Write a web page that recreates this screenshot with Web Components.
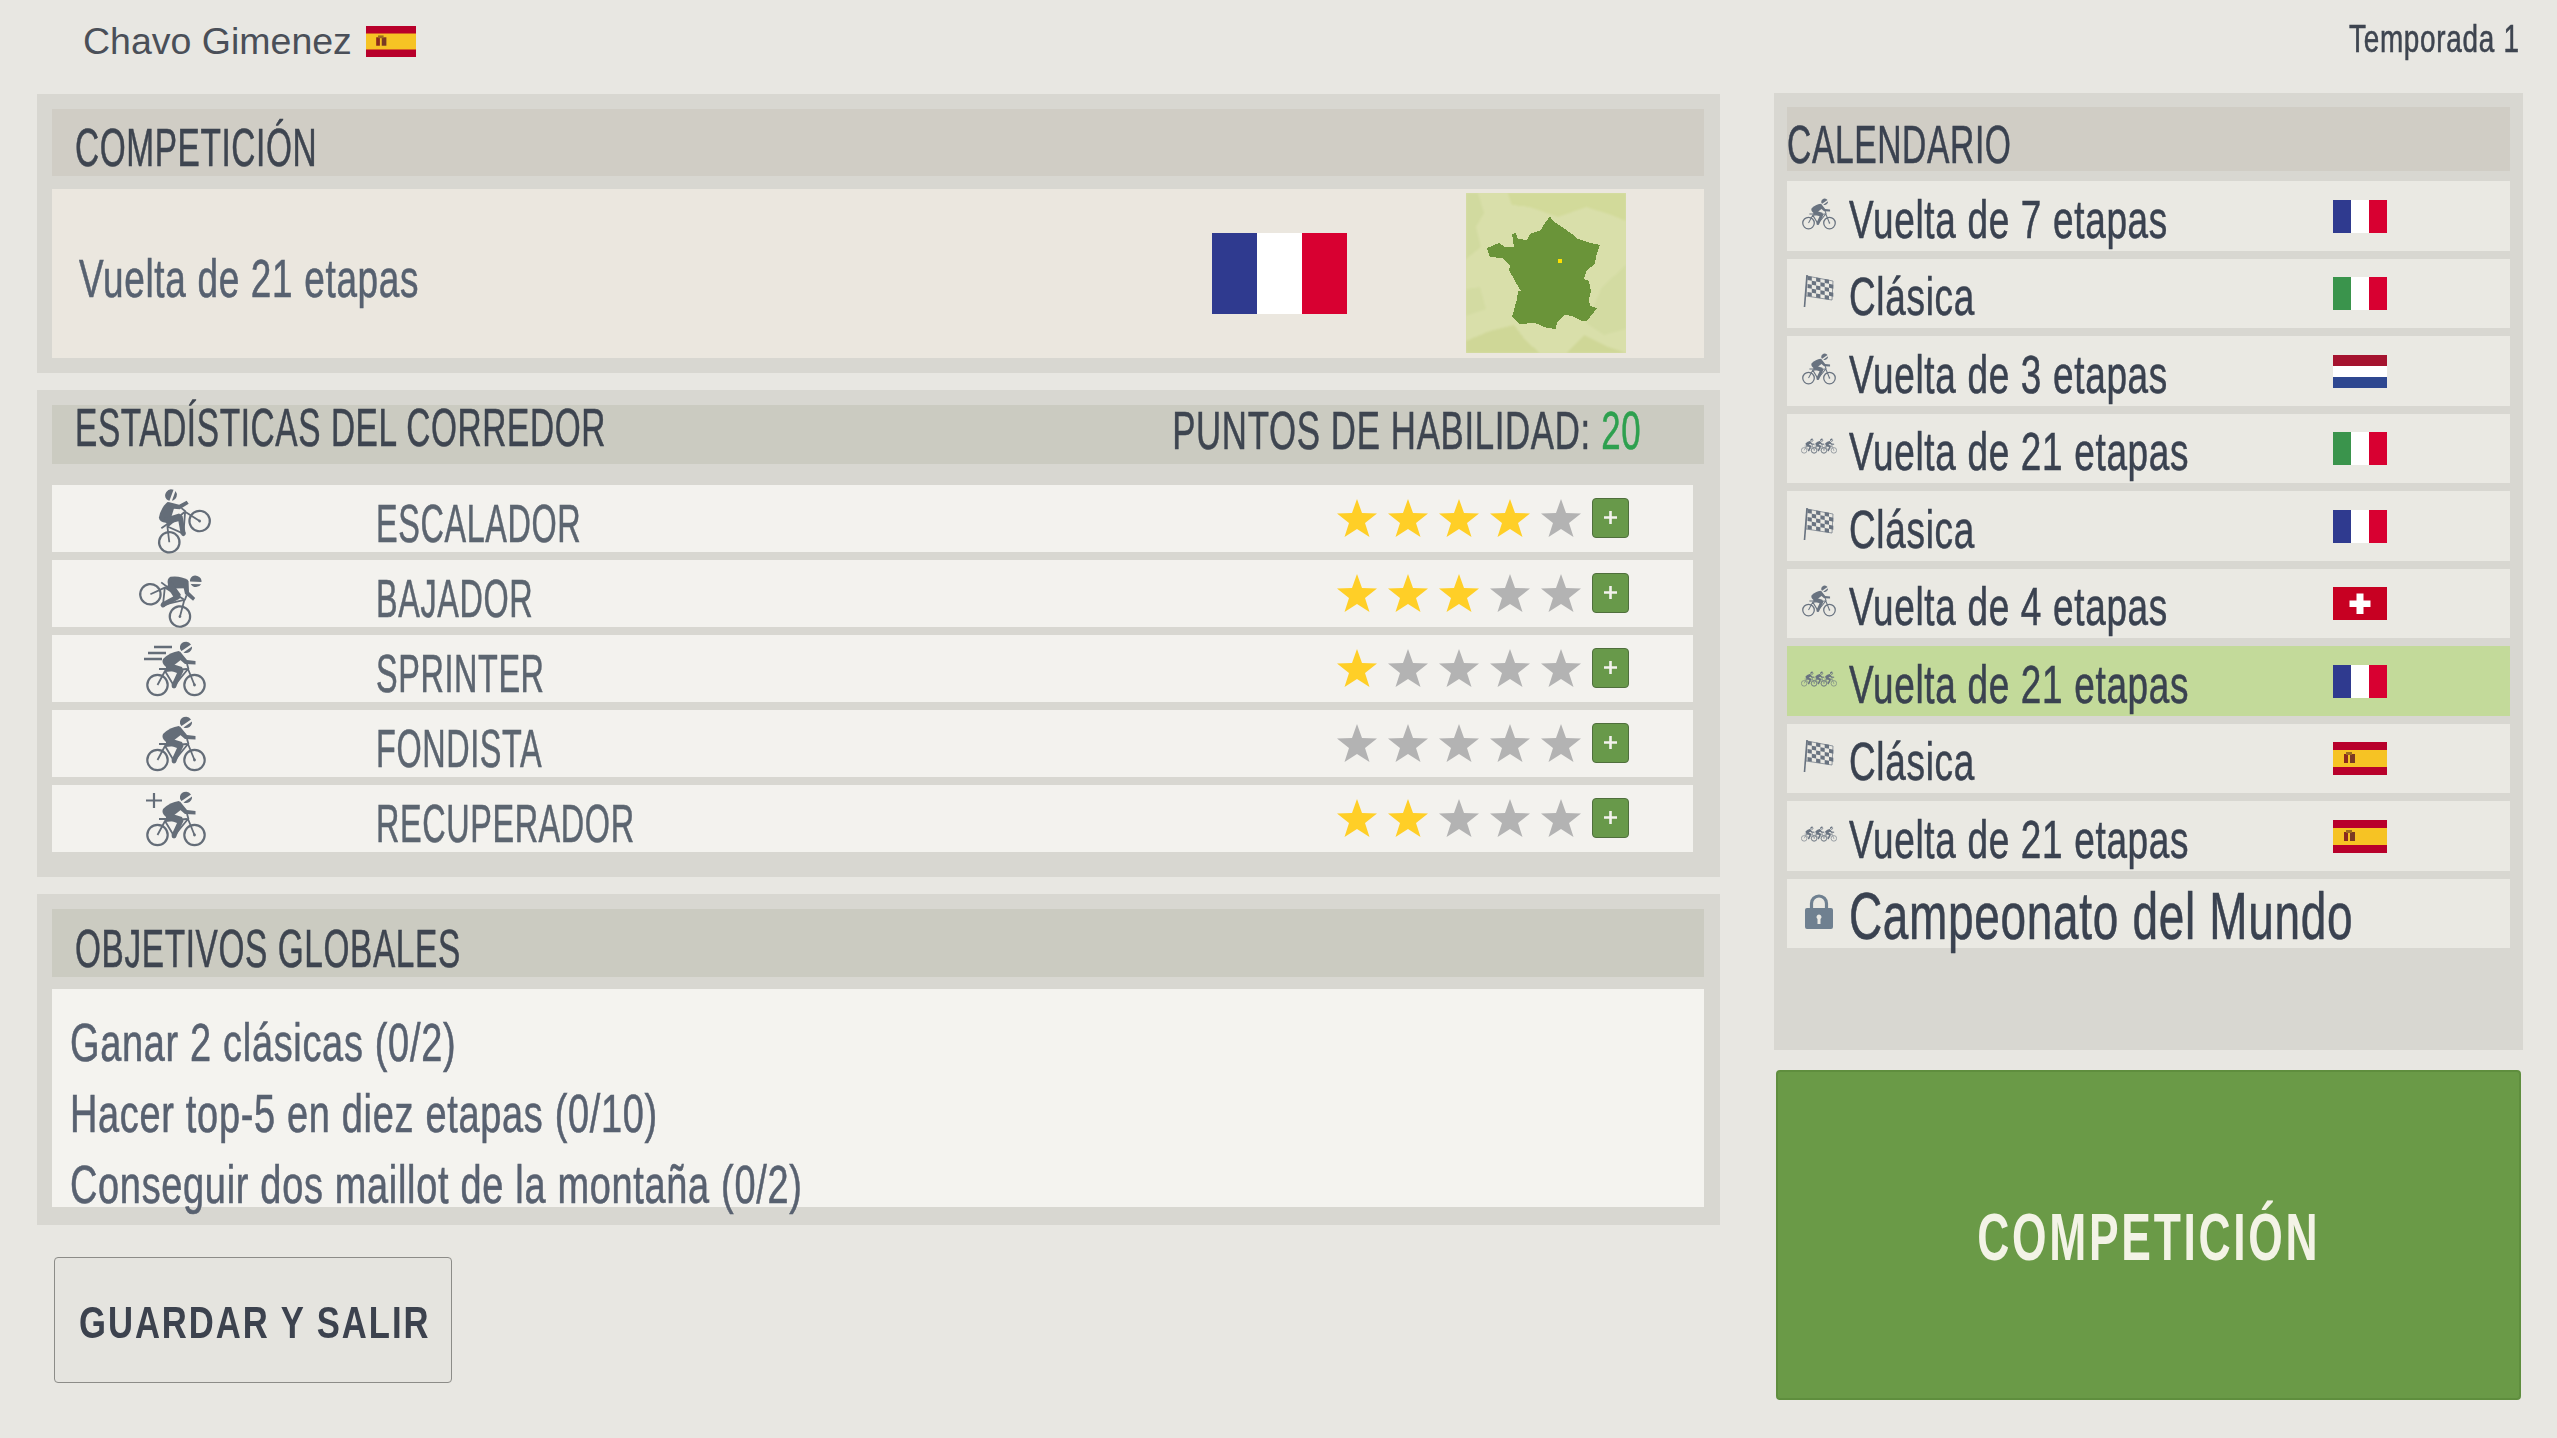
<!DOCTYPE html>
<html lang="es">
<head>
<meta charset="utf-8">
<title>Calendario</title>
<style>
  html, body { margin: 0; height: 100%; }
  body {
    width: 2557px;
    height: 1438px;
    overflow: hidden;
    background: #e8e7e2;
    color: #3e4550;
    font-family: "Liberation Sans", sans-serif;
  }
  .stack { display: flex; flex-direction: column; }
  .columns {
    display: grid;
    grid-template-columns: 1683px 749px;
    column-gap: 54px;
    padding-left: 37px;
    align-items: start;
  }
  .left { gap: 17px; }
  .right { gap: 20px; margin-top: -1px; }
</style>
</head>
<body>
  <top-bar player="Chavo Gimenez" season="Temporada 1"></top-bar>
  <div class="columns">
    <div class="stack left">
      <race-panel heading="COMPETICIÓN" height="279" tone="#d0cdc5" drop="8">
        <race-summary>Vuelta de 21 etapas</race-summary>
      </race-panel>
      <race-panel heading="ESTADÍSTICAS DEL CORREDOR" height="487" head="59" points="20" gap="21" drop="-15" tone="#cbcbc1">
        <stat-row kind="climber" stars="4">ESCALADOR</stat-row>
        <stat-row kind="descent" stars="3">BAJADOR</stat-row>
        <stat-row kind="sprint" stars="1">SPRINTER</stat-row>
        <stat-row kind="plain" stars="0">FONDISTA</stat-row>
        <stat-row kind="plus" stars="2">RECUPERADOR</stat-row>
      </race-panel>
      <race-panel heading="OBJETIVOS GLOBALES" height="331" head="68" gap="12" drop="9" tone="#cbcbc1">
        <goal-list>
          <li>Ganar 2 clásicas (0/2)</li>
          <li>Hacer top-5 en diez etapas (0/10)</li>
          <li>Conseguir dos maillot de la montaña (0/2)</li>
        </goal-list>
      </race-panel>
      <save-button>GUARDAR Y SALIR</save-button>
    </div>
    <div class="stack right">
      <calendar-panel>
        <cal-row kind="solo" code="fr">Vuelta de 7 etapas</cal-row>
        <cal-row kind="flag" code="it">Clásica</cal-row>
        <cal-row kind="solo" code="nl">Vuelta de 3 etapas</cal-row>
        <cal-row kind="group" code="it">Vuelta de 21 etapas</cal-row>
        <cal-row kind="flag" code="fr">Clásica</cal-row>
        <cal-row kind="solo" code="ch">Vuelta de 4 etapas</cal-row>
        <cal-row kind="group" code="fr" current>Vuelta de 21 etapas</cal-row>
        <cal-row kind="flag" code="es">Clásica</cal-row>
        <cal-row kind="group" code="es">Vuelta de 21 etapas</cal-row>
        <cal-row kind="lock" big>Campeonato del Mundo</cal-row>
      </calendar-panel>
      <go-button>COMPETICIÓN</go-button>
    </div>
  </div>

<script>
// the rider drawn on a 60x54 box, used by the stat rows and the calendar
function riderMarkup() {
  return `
    <g fill="none" stroke="currentColor" stroke-width="2.200">
      <circle cx="11.500" cy="43" r="10.200"/>
      <circle cx="48.500" cy="43" r="10.200"/>
    </g>
    <g fill="none" stroke="currentColor" stroke-width="1.800" stroke-linejoin="round">
      <path d="M11.500 43 19 29 28 44 42 27 48.500 43"/>
      <path d="M19 29 41 27M13 27h11M41 22l1.500 5"/>
    </g>
    <g fill="currentColor">
      <path d="M33 9Q24 10 17 17 15 21 20 25L27 24 36 17Z"/>
      <path d="M20 20 36 25 37.500 29 30 45 25.500 43 31 31 20 27Z"/>
      <path d="M31 10 34 9.500 41 18 49.500 19 49.500 22.500 39 22 32 16Z"/>
      <path d="M34 6.500a6 6 0 0 1 11-4l-9.500 6.500a6 6 0 0 1-1.500-2.500Z"/>
      <path d="M37.500 10.500 46 4.500a6 6 0 0 1-8.500 6Z"/>
      <circle cx="48.500" cy="43" r="1.400"/>
      <circle cx="28" cy="44" r="2.400"/>
    </g>`;
}

function flagMarkup(code) {
  const bars = (a, b, c) => `<rect width="54" height="33" fill="${b}"/><rect width="18" height="33" fill="${a}"/><rect x="36" width="18" height="33" fill="${c}"/>`;
  switch (code) {
    case "fr": return bars("#2f3a8f", "#ffffff", "#d80031");
    case "it": return bars("#3a944c", "#ffffff", "#d80031");
    case "nl": return `<rect width="54" height="33" fill="#fff"/><rect width="54" height="11" fill="#a5132f"/><rect y="22" width="54" height="11" fill="#2e4790"/>`;
    case "ch": return `<rect width="54" height="33" fill="#c70022"/><path d="M23.500 6.500h7v7h7v6.500h-7v7h-7v-7h-7v-6.500h7Z" fill="#fff"/>`;
    default: return `<rect width="54" height="33" fill="#b8002b"/><rect y="8" width="54" height="17" fill="#f6c324"/>
      <rect x="11" y="12" width="4" height="9" fill="#8a2a1e"/><rect x="17" y="12" width="5" height="9" fill="#7a3a24"/><rect x="13" y="10" width="6" height="3" fill="#9c6a1f"/>`;
  }
}

class TextFit extends HTMLElement {
  constructor() {
    super();
    this.attachShadow({ mode: "open" });
    this.shadowRoot.innerHTML = `
    <style>
      :host {
        display: inline-block;
        white-space: nowrap;
        font-family: "Liberation Sans Narrow", "Liberation Sans", sans-serif;
        font-size: 54px;
        letter-spacing: 1px;
        -webkit-text-stroke: var(--ink, .6px) currentColor;
        transform: scaleX(var(--fit, .684));
        transform-origin: var(--fit-from, left) center;
      }
    </style>
    <slot></slot>`;
  }
}
customElements.define("text-fit", TextFit);

class NationFlag extends HTMLElement {
  connectedCallback() {
    const root = this.shadowRoot || this.attachShadow({ mode: "open" });
    root.innerHTML = `
    <style>
      :host { display: block; flex: none; width: var(--w, 54px); height: var(--h, 33px); }
      svg { display: block; width: 100%; height: 100%; }
    </style>
    <svg viewBox="0 0 54 33" preserveAspectRatio="none">${flagMarkup(this.getAttribute("code"))}</svg>`;
  }
}
customElements.define("nation-flag", NationFlag);

class TopBar extends HTMLElement {
  connectedCallback() {
    this.attachShadow({ mode: "open" }).innerHTML = `
    <style>
      :host {
        display: flex;
        align-items: center;
        height: 94px;
        padding: 0 37px 12px 83px;
        box-sizing: border-box;
        color: #4a4f58;
      }
      .name { font-size: 37.500px; }
      nation-flag { --w: 50px; --h: 31px; margin-left: 14px; }
      .season {
        margin: -4px 0 0 auto;
        font-size: 39px;
        color: #3e4550;
        --fit-from: right;
        --fit: .715;
      }
    </style>
    <span class="name">${this.getAttribute("player")}</span>
    <nation-flag code="es"></nation-flag>
    <text-fit class="season">${this.getAttribute("season")}</text-fit>`;
  }
}
customElements.define("top-bar", TopBar);

class RacePanel extends HTMLElement {
  connectedCallback() {
    const head = this.getAttribute("head") || 67;
    const gap = this.getAttribute("gap") || 13;
    const points = this.getAttribute("points");
    const drop = this.getAttribute("drop") || 0;
    this.attachShadow({ mode: "open" }).innerHTML = `
    <style>
      :host {
        display: flex;
        flex-direction: column;
        box-sizing: border-box;
        height: ${this.getAttribute("height")}px;
        padding: 15px 16px 15px 15px;
        background: #d8d7d1;
      }
      header {
        display: flex;
        align-items: center;
        height: ${head}px;
        flex: none;
        padding: 0 63px 0 23px;
        background: ${this.getAttribute("tone") || "#cecdc4"};
        color: #3e4550;
        --fit: .618;
      }
      .title { margin-top: ${drop}px; width: 0; }
      .points { --fit-from: right; --fit: .645; margin: -9px 0 0 auto; }
      .points b { font-weight: normal; color: #2ea04f; }
      .body { display: flex; flex-direction: column; flex: 1; gap: 8px; margin-top: ${gap}px; min-height: 0; }
    </style>
    <header>
      <text-fit class="title">${this.getAttribute("heading")}</text-fit>
      ${points ? `<text-fit class="points">PUNTOS DE HABILIDAD: <b>${points}</b></text-fit>` : ""}
    </header>
    <div class="body"><slot></slot></div>`;
  }
}
customElements.define("race-panel", RacePanel);

class RaceSummary extends HTMLElement {
  connectedCallback() {
    this.attachShadow({ mode: "open" }).innerHTML = `
    <style>
      :host {
        display: flex;
        align-items: center;
        height: 169px;
        padding-left: 27px;
        background: #ebe7df;
        color: #576170;
      }
      text-fit { margin-top: 9px; }
      nation-flag { --w: 135px; --h: 81px; margin-left: auto; margin-top: -1px; }
      .map { display: block; flex: none; width: 160px; height: 160px; margin: -1px 78px 0 119px; }
    </style>
    <text-fit><slot></slot></text-fit>
    <nation-flag code="fr"></nation-flag>
    <svg class="map" viewBox="0 0 160 160" shape-rendering="crispEdges">
      <defs><filter id="soft"><feGaussianBlur stdDeviation="1"/></filter></defs>
      <rect width="160" height="160" fill="#d9dfaa"/>
      <g filter="url(#soft)">
        <path d="M42 0h118v28L146 22 120 14 92 24 64 14 46 12Z" fill="#d2da9a"/>
        <path d="M0 0h12l6 20-8 14 5 20-15 12Z" fill="#d1da9f"/>
        <path d="M0 96l14-2 6 22-20 7Z M136 94l24-22v64l-22 6-18-12Z" fill="#d3dba2"/>
        <path d="M0 148l24-10 24-6 12 16 14 12H0Z M100 160l18-18 24 12 18 6Z" fill="#cfd797"/>
      </g>
      <path fill="#6a9439" d="M77 33 84 23 87 28 99 36 106 41 112 46 121 49 134 52 130 63 129 71 121 77 118 86 123 88 125 98 123 106 124 113 131 115 121 128 116 128 106 123 99 122 91 129 90 136 81 135 69 130 54 131 46 124 51 106 52 98 55 98 49 88 43 77 44 73 36 65 24 64 21 55 33 50 39 54 48 54 46 41 50 40 52 46 61 47 64 41 75 37Z"/>
      <rect x="92" y="66" width="4" height="4" fill="#ffe000"/>
    </svg>`;
  }
}
customElements.define("race-summary", RaceSummary);

class RiderIcon extends HTMLElement {
  connectedCallback() {
    const kind = this.getAttribute("kind");
    let extra = "";
    let wrap = "";
    if (kind === "climber") wrap = "translate(1 -1) rotate(-35 30 30)";
    if (kind === "descent") wrap = "translate(-3 -2) rotate(37 30 30)";
    if (kind === "sprint") {
      extra = `<path d="M8 5h18M2 11h18M-2 17h18" stroke="currentColor" stroke-width="2.400"/>`;
    }
    if (kind === "plus") {
      extra = `<path d="M8 1v15M0 8.500h16" stroke="currentColor" stroke-width="2.200"/>`;
    }
    this.attachShadow({ mode: "open" }).innerHTML = `
    <style>
      :host { display: block; width: 100px; height: 84px; color: #646d78; }
      svg { display: block; overflow: visible; }
    </style>
    <svg width="100" height="84" viewBox="-20 -15 100 84">
      ${extra}<g transform="${wrap}">${riderMarkup()}</g>
    </svg>`;
  }
}
customElements.define("rider-icon", RiderIcon);

class StatRow extends HTMLElement {
  connectedCallback() {
    const lit = Number(this.getAttribute("stars"));
    let stars = "";
    for (let i = 0; i < 5; i++) {
      stars += `<svg class="star" viewBox="0 0 40 38" fill="${i < lit ? "#ffcf27" : "#b3b3b3"}"><path d="M20 0 25 14 40 14.500 28 24 32.500 38 20 30 7.500 38 12 24 0 14.500 15 14Z"/></svg>`;
    }
    this.attachShadow({ mode: "open" }).innerHTML = `
    <style>
      :host {
        display: flex;
        align-items: center;
        height: 67px;
        width: 1641px;
        background: #f3f2ee;
        color: #5c6570;
      }
      .icon { display: flex; flex: none; justify-content: center; width: 248px; height: 67px; align-items: center; }
      .label { margin-left: 76px; margin-top: 8px; --fit: .6; }
      .rating { display: flex; align-items: center; gap: 11px; margin-left: auto; margin-right: 64px; margin-top: -2px; }
      .star { display: block; width: 40px; height: 38px; }
      .plus {
        display: flex;
        align-items: center;
        justify-content: center;
        box-sizing: border-box;
        width: 37px;
        height: 40px;
        background: #68994a;
        border: 1px solid #4f6f3c;
        border-radius: 4px;
        color: #f3f2ee;
      }
    </style>
    <div class="icon"><rider-icon kind="${this.getAttribute("kind")}"></rider-icon></div>
    <text-fit class="label"><slot></slot></text-fit>
    <div class="rating">
      ${stars}
      <div class="plus"><svg width="15" height="15" viewBox="0 0 15 15"><path d="M7.500 1v13M1 7.500h13" stroke="currentColor" stroke-width="2.600"/></svg></div>
    </div>`;
  }
}
customElements.define("stat-row", StatRow);

class GoalList extends HTMLElement {
  connectedCallback() {
    this.attachShadow({ mode: "open" }).innerHTML = `
    <style>
      :host {
        display: block;
        height: 218px;
        box-sizing: border-box;
        padding: 18px 0 0 18px;
        background: #f4f3ef;
        color: #586170;
      }
      text-fit { --fit: .702; }
      ::slotted(li) { display: block; height: 71px; line-height: 71px; }
    </style>
    <text-fit><slot></slot></text-fit>`;
  }
}
customElements.define("goal-list", GoalList);

class SaveButton extends HTMLElement {
  connectedCallback() {
    this.attachShadow({ mode: "open" }).innerHTML = `
    <style>
      :host {
        display: flex;
        align-items: center;
        box-sizing: border-box;
        width: 398px;
        height: 126px;
        margin: 15px 0 0 17px;
        padding-left: 24px;
        background: #e5e4df;
        border: 1px solid #8c8c88;
        border-radius: 4px;
        color: #3c424e;
      }
      text-fit {
        --fit: .787;
        --ink: 0;
        font-size: 44px;
        font-weight: bold;
        letter-spacing: 2.500px;
        margin-top: 6px;
      }
    </style>
    <text-fit><slot></slot></text-fit>`;
  }
}
customElements.define("save-button", SaveButton);

class CalendarPanel extends HTMLElement {
  connectedCallback() {
    this.attachShadow({ mode: "open" }).innerHTML = `
    <style>
      :host {
        display: block;
        box-sizing: border-box;
        height: 957px;
        padding: 14px 13px 0 13px;
        background: #d8d7d1;
      }
      header {
        display: flex;
        align-items: center;
        height: 64px;
        margin-bottom: 10px;
        background: #d0cdc5;
        color: #3a4250;
      }
      text-fit { --fit: .622; margin-top: 9px; }
      .rows { display: flex; flex-direction: column; gap: 8px; }
    </style>
    <header><text-fit>CALENDARIO</text-fit></header>
    <div class="rows"><slot></slot></div>`;
  }
}
customElements.define("calendar-panel", CalendarPanel);

class RaceIcon extends HTMLElement {
  connectedCallback() {
    const kind = this.getAttribute("kind");
    let art = "";
    if (kind === "solo") {
      art = `<svg width="34" height="32" viewBox="0 0 60 54">${riderMarkup()}</svg>`;
    } else if (kind === "group") {
      art = `<svg width="36" height="16" viewBox="0 0 132 54"><g transform="translate(0 0)">${riderMarkup()}</g><g transform="translate(36 0)">${riderMarkup()}</g><g transform="translate(72 0)">${riderMarkup()}</g></svg>`;
    } else if (kind === "flag") {
      let cells = "";
      for (let r = 0; r < 5; r++) {
        for (let c = 0; c < 6; c++) {
          if ((r + c) % 2 === 0) cells += `<rect x="${c * 4.300}" y="${r * 4}" width="4.300" height="4"/>`;
        }
      }
      art = `<svg width="32" height="34" viewBox="0 0 32 34">
        <path d="M1.500 33 4 1" stroke="currentColor" stroke-width="1.600" fill="none"/>
        <g transform="matrix(1 .18 0 1 4.500 2)" fill="currentColor">${cells}</g>
        <path d="M4 2 30 7 29 26 3 22Z" fill="none" stroke="currentColor" stroke-width=".7"/>
      </svg>`;
    } else {
      art = `<svg width="28" height="35" viewBox="0 0 28 35">
        <path d="M6.500 16V9.500a7.500 7.500 0 0 1 15 0V16" fill="none" stroke="#6f8090" stroke-width="3.200"/>
        <path fill-rule="evenodd" fill="#6f8090" d="M2 14h24a2 2 0 0 1 2 2v17a2 2 0 0 1-2 2H2a2 2 0 0 1-2-2V16a2 2 0 0 1 2-2ZM14 20.500a2.500 2.500 0 0 0-1.500 4.500v5h3v-5a2.500 2.500 0 0 0-1.500-4.500Z"/>
      </svg>`;
    }
    this.attachShadow({ mode: "open" }).innerHTML = `
    <style>
      :host { display: flex; flex: none; align-items: center; justify-content: center; width: 36px; color: #697380; }
      svg { display: block; }
    </style>
    ${art}`;
  }
}
customElements.define("race-icon", RaceIcon);

class CalRow extends HTMLElement {
  connectedCallback() {
    const code = this.getAttribute("code");
    const big = this.hasAttribute("big");
    this.attachShadow({ mode: "open" }).innerHTML = `
    <style>
      :host {
        display: flex;
        align-items: center;
        box-sizing: border-box;
        height: 69.500px;
        padding: 0 123px 0 14px;
        background: ${this.hasAttribute("current") ? "#c3da9a" : "#eae9e3"};
        color: #3a4250;
      }
      race-icon { margin: -4px 12px 0 0; }
      text-fit { ${big ? "font-size: 66px; --fit: .696;" : ""} margin-top: 6px; width: 0; }
      nation-flag { margin: 1px 0 0 auto; }
    </style>
    <race-icon kind="${this.getAttribute("kind")}"></race-icon>
    <text-fit><slot></slot></text-fit>
    ${code ? `<nation-flag code="${code}"></nation-flag>` : ""}`;
  }
}
customElements.define("cal-row", CalRow);

class GoButton extends HTMLElement {
  connectedCallback() {
    this.attachShadow({ mode: "open" }).innerHTML = `
    <style>
      :host {
        display: flex;
        align-items: center;
        justify-content: center;
        box-sizing: border-box;
        height: 330px;
        margin: 0 2px;
        background: #6a9a47;
        border: 2px solid #5f8e3e;
        border-radius: 4px;
        color: #f3f3e6;
      }
      text-fit {
        --fit: .673;
        --ink: 0;
        --fit-from: center;
        font-size: 66px;
        font-weight: bold;
        letter-spacing: 4px;
        margin-top: 3px;
      }
    </style>
    <text-fit><slot></slot></text-fit>`;
  }
}
customElements.define("go-button", GoButton);
</script>
</body>
</html>
